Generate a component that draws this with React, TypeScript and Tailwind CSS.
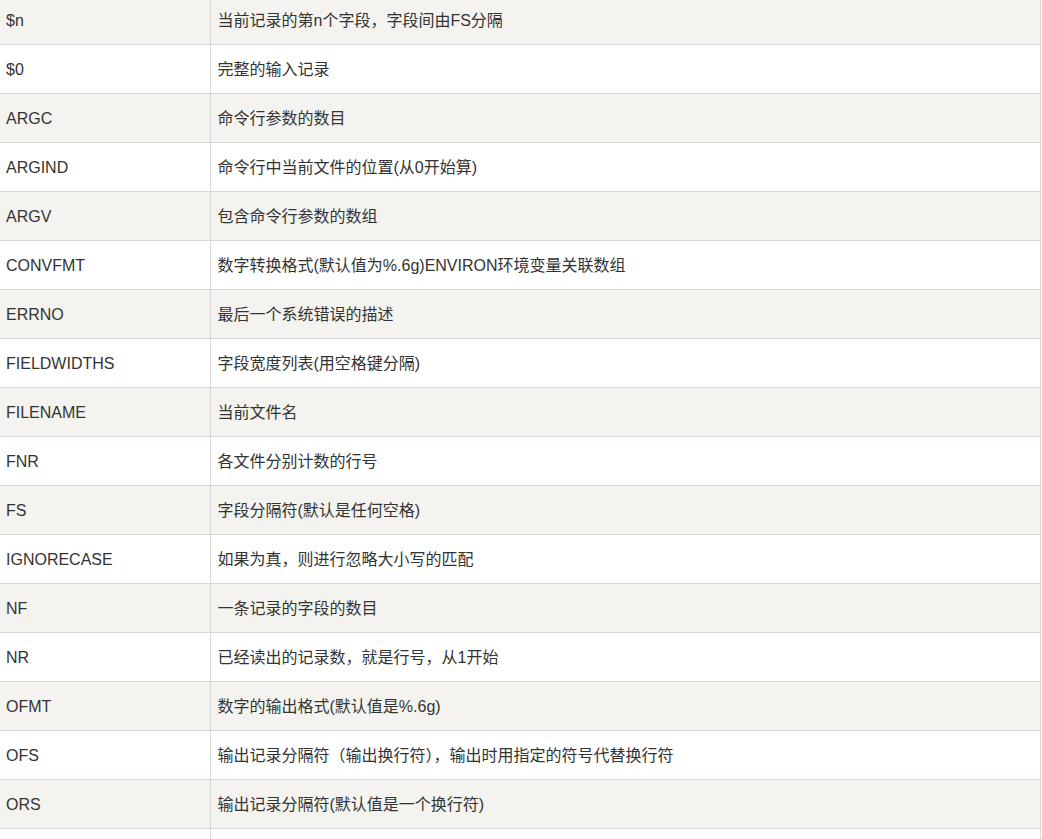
const rows: [string, string][] = [
  ['$n', '当前记录的第n个字段，字段间由FS分隔'],
  ['$0', '完整的输入记录'],
  ['ARGC', '命令行参数的数目'],
  ['ARGIND', '命令行中当前文件的位置(从0开始算)'],
  ['ARGV', '包含命令行参数的数组'],
  ['CONVFMT', '数字转换格式(默认值为%.6g)ENVIRON环境变量关联数组'],
  ['ERRNO', '最后一个系统错误的描述'],
  ['FIELDWIDTHS', '字段宽度列表(用空格键分隔)'],
  ['FILENAME', '当前文件名'],
  ['FNR', '各文件分别计数的行号'],
  ['FS', '字段分隔符(默认是任何空格)'],
  ['IGNORECASE', '如果为真，则进行忽略大小写的匹配'],
  ['NF', '一条记录的字段的数目'],
  ['NR', '已经读出的记录数，就是行号，从1开始'],
  ['OFMT', '数字的输出格式(默认值是%.6g)'],
  ['OFS', '输出记录分隔符（输出换行符），输出时用指定的符号代替换行符'],
  ['ORS', '输出记录分隔符(默认值是一个换行符)'],
  // next row only shows its top edge in the viewport
  ['', ''],
];

export default function App() {
  return (
    <div
      className="h-[839px] overflow-hidden bg-white text-[16px] text-[#333333]"
      style={{ fontFamily: '"Liberation Sans", "Noto Sans CJK SC", sans-serif' }}
    >
      <table className="mt-[-5px] w-[1041px] border-collapse table-fixed">
        <colgroup>
          <col className="w-[210px]" />
          <col />
        </colgroup>
        <tbody>
          {rows.map(([name, desc], i) => (
            <tr key={i} className={i % 2 === 0 ? 'bg-[#f4f3ef]' : 'bg-white'}>
              <td className="h-[49px] border-y border-[#d6d6d6] pl-[6px] pt-[2px] align-middle leading-[20px]">
                {name}
              </td>
              <td className="h-[49px] border border-[#d6d6d6] pl-[7px] pt-[2px] align-middle leading-[20px]">
                {desc}
              </td>
            </tr>
          ))}
        </tbody>
      </table>
    </div>
  );
}
